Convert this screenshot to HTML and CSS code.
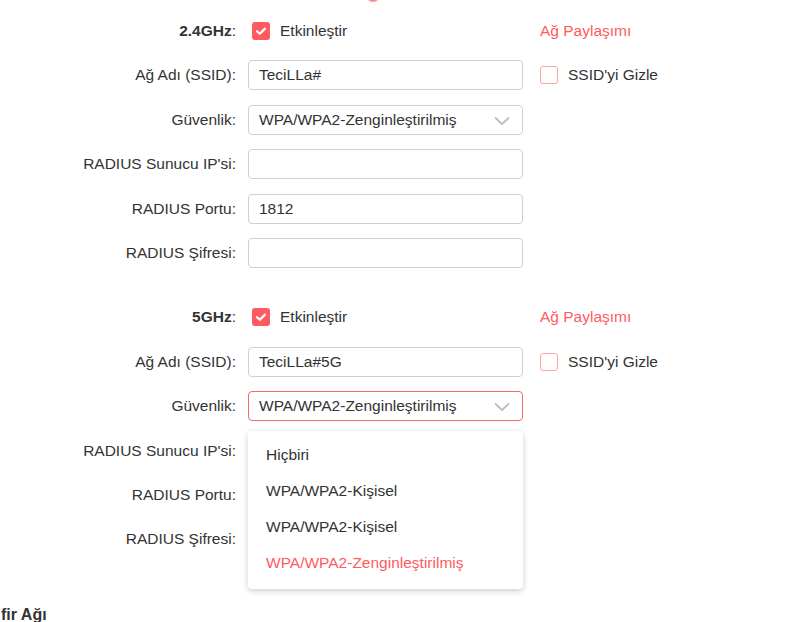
FILE: index.html
```html
<!DOCTYPE html>
<html lang="tr">
<head>
<meta charset="utf-8">
<title>Kablosuz</title>
<link rel="stylesheet" href="styles.css">
</head>
<body>
<div class="page">
  <span class="top-dot"></span>

  <section class="band">
    <div class="row">
      <label class="lbl"><b>2.4GHz</b>:</label>
      <div class="ctl check-line"><span class="cb on"><svg viewBox="0 0 18 18"><path d="M5 9.2l2.8 2.6L13 6.6" fill="none" stroke="#fff" stroke-width="2.2" stroke-linecap="round" stroke-linejoin="round"/></svg></span><span>Etkinleştir</span></div>
      <div class="extra link">Ağ Paylaşımı</div>
    </div>
    <div class="row">
      <label class="lbl">Ağ Adı (SSID):</label>
      <div class="ctl"><div class="input">TeciLLa#</div></div>
      <div class="extra check-line"><span class="cb off"></span><span>SSID'yi Gizle</span></div>
    </div>
    <div class="row">
      <label class="lbl">Güvenlik:</label>
      <div class="ctl"><div class="input select">WPA/WPA2-Zenginleştirilmiş<svg class="chev" viewBox="0 0 16 10"><path d="M1.5 2l6.5 6 6.5-6" fill="none" stroke="#bdbdbd" stroke-width="1.8" stroke-linecap="round" stroke-linejoin="round"/></svg></div></div>
    </div>
    <div class="row">
      <label class="lbl">RADIUS Sunucu IP'si:</label>
      <div class="ctl"><div class="input"></div></div>
    </div>
    <div class="row">
      <label class="lbl">RADIUS Portu:</label>
      <div class="ctl"><div class="input">1812</div></div>
    </div>
    <div class="row">
      <label class="lbl">RADIUS Şifresi:</label>
      <div class="ctl"><div class="input"></div></div>
    </div>
  </section>

  <section class="band band2">
    <div class="row">
      <label class="lbl"><b>5GHz</b>:</label>
      <div class="ctl check-line"><span class="cb on"><svg viewBox="0 0 18 18"><path d="M5 9.2l2.8 2.6L13 6.6" fill="none" stroke="#fff" stroke-width="2.2" stroke-linecap="round" stroke-linejoin="round"/></svg></span><span>Etkinleştir</span></div>
      <div class="extra link">Ağ Paylaşımı</div>
    </div>
    <div class="row">
      <label class="lbl">Ağ Adı (SSID):</label>
      <div class="ctl"><div class="input">TeciLLa#5G</div></div>
      <div class="extra check-line"><span class="cb off"></span><span>SSID'yi Gizle</span></div>
    </div>
    <div class="row">
      <label class="lbl">Güvenlik:</label>
      <div class="ctl anchor">
        <div class="input select focus">WPA/WPA2-Zenginleştirilmiş<svg class="chev" viewBox="0 0 16 10"><path d="M1.5 2l6.5 6 6.5-6" fill="none" stroke="#bdbdbd" stroke-width="1.8" stroke-linecap="round" stroke-linejoin="round"/></svg></div>
        <ul class="menu">
          <li>Hiçbiri</li>
          <li>WPA/WPA2-Kişisel</li>
          <li>WPA/WPA2-Kişisel</li>
          <li class="sel">WPA/WPA2-Zenginleştirilmiş</li>
        </ul>
      </div>
    </div>
    <div class="row">
      <label class="lbl">RADIUS Sunucu IP'si:</label>
      <div class="ctl"><div class="input"></div></div>
    </div>
    <div class="row">
      <label class="lbl">RADIUS Portu:</label>
      <div class="ctl"><div class="input"></div></div>
    </div>
    <div class="row">
      <label class="lbl">RADIUS Şifresi:</label>
      <div class="ctl"><div class="input"></div></div>
    </div>
  </section>

  <h2 class="heading">fir Ağı</h2>
</div>
</body>
</html>
```
FILE: styles.css
```css
* { box-sizing: border-box; }
html, body { margin: 0; padding: 0; background: #fff; }
body {
  font-family: "Liberation Sans", Arial, sans-serif;
  font-size: 15.5px;
  color: #333;
  overflow: hidden;
  height: 622px;
}
.page {
  position: relative;
  padding-top: 16px;
}
.top-dot {
  position: absolute;
  left: 366px;
  top: -12px;
  width: 14px;
  height: 14px;
  border-radius: 50%;
  background: #ff8a8a;
}
.band {
  display: flex;
  flex-direction: column;
  gap: 14.4px;
}
.band2 { margin-top: 34.5px; }
.row {
  display: grid;
  grid-template-columns: 236px 275px 1fr;
  column-gap: 12px;
  height: 30px;
  align-items: center;
}
.lbl {
  text-align: right;
  white-space: nowrap;
}
.lbl b { font-weight: bold; }
.ctl { position: relative; height: 30px; }
.check-line {
  display: flex;
  align-items: center;
  gap: 10px;
  height: 30px;
}
.ctl.check-line { padding-left: 4px; }
.extra { padding-left: 5px; }
.link { color: #ff5a5f; }
.cb {
  width: 18px;
  height: 18px;
  border-radius: 3px;
  flex: none;
  display: block;
}
.cb svg { width: 18px; height: 18px; display: block; }
.cb.on { background: #ff5a5f; }
.cb.off { border: 1.5px solid #ffa3a3; background: #fff; }
.input {
  height: 30px;
  border: 1px solid #d0d0d0;
  border-radius: 4px;
  padding: 0 10px;
  display: flex;
  align-items: center;
  white-space: nowrap;
  color: #333;
  background: #fff;
}
.select { justify-content: space-between; padding-right: 12px; }
.select.focus { border-color: #f26a6a; }
.chev { width: 16px; height: 10px; margin-top: 2px; }
.menu {
  position: absolute;
  left: 0;
  top: 40px;
  width: 275px;
  margin: 0;
  padding: 6px 0 8px;
  list-style: none;
  background: #fff;
  border-radius: 4px;
  box-shadow: 0 2px 6px rgba(0,0,0,0.2);
  z-index: 5;
}
.menu li {
  height: 36px;
  line-height: 36px;
  padding-left: 18px;
  color: #333;
  white-space: nowrap;
}
.menu li.sel { color: #ff5a5f; }
.heading {
  margin: 51.5px 0 0 1px;
  font-size: 16px;
  font-weight: bold;
  color: #333;
}
```
